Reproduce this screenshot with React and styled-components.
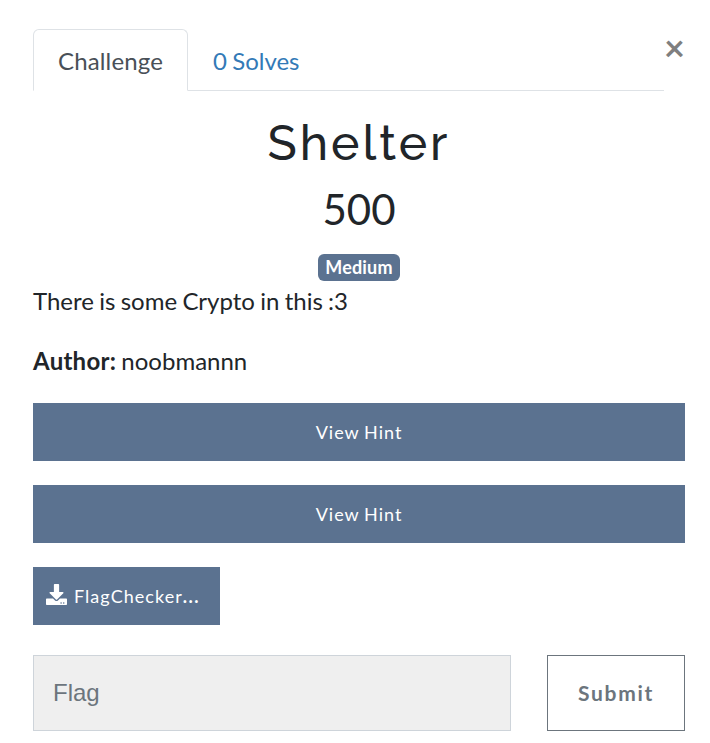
import React from "react";
import styled, { createGlobalStyle } from "styled-components";
import { FaDownload } from "react-icons/fa";

const GlobalStyle = createGlobalStyle`
  *, *::before, *::after { box-sizing: border-box; }
  body {
    margin: 0;
    background: #fff;
    color: #212529;
    font: 400 24px/36px Lato, sans-serif;
    word-spacing: -0.85px;
    overflow: hidden;
  }
`;

const Modal = styled.main`
  width: 710px;
  height: 743px;
  padding: 29px 25px 0 33px;
`;

const Header = styled.header`
  display: flex;
  width: 652px;
`;

const Tabs = styled.nav`
  display: flex;
  width: 631px;
  height: 62px;
  border-bottom: 1px solid #dee2e6;
`;

const Tab = styled.button`
  height: 62px;
  padding: 1px 24px 0;
  border: 1px solid ${(p) => (p.$active ? "#dee2e6" : "transparent")};
  border-bottom-color: ${(p) => (p.$active ? "#fff" : "transparent")};
  border-radius: 6px 6px 0 0;
  background: ${(p) => (p.$active ? "#fff" : "transparent")};
  color: ${(p) => (p.$active ? "#495057" : "#337ab7")};
  font: inherit;
  letter-spacing: ${(p) => (p.$active ? "0.14px" : "0")};
  word-spacing: -0.85px;
`;

const Close = styled.button`
  width: 21px;
  height: 36px;
  padding: 0;
  border: 0;
  background: none;
  color: #7f7f7f;
  font: 700 36px/36px Lato, sans-serif;
`;

const Title = styled.h2`
  margin: 23px 0 0;
  font: 500 48px/58px Raleway, sans-serif;
  letter-spacing: 3px;
  text-align: center;
`;

const Points = styled.h3`
  margin: 8px 0 0;
  font: 400 42px/58px Lato, sans-serif;
  text-align: center;
`;

const BadgeRow = styled.div`
  display: flex;
  justify-content: center;
  margin-top: 16px;
`;

const Badge = styled.span`
  width: 82px;
  height: 27px;
  border-radius: 6px;
  background: #5b7290;
  color: #fff;
  font: 700 18px/26px Lato, sans-serif;
  letter-spacing: 0.15px;
  text-align: center;
`;

const Text = styled.p`
  margin: ${(p) => p.$top || 0}px 0 0;
`;

const Label = styled.strong`
  letter-spacing: 0.25px;
`;

const Hint = styled.button`
  display: block;
  width: 652px;
  height: 58px;
  margin-top: 24px;
  padding: 0;
  border: 0;
  background: #5b7290;
  color: #fff;
  font: 400 18px/27px Lato, sans-serif;
  letter-spacing: 1px;
  word-spacing: -0.9px;
`;

const FileButton = styled(Hint)`
  display: flex;
  align-items: center;
  width: 187px;
  padding: 0 13px;
  gap: 7px;
  letter-spacing: 1.05px;

  svg { margin-top: -3px; }
  b { letter-spacing: 1.4px; }
`;

const Form = styled.form`
  display: flex;
  justify-content: space-between;
  margin-top: 30px;
`;

const FlagInput = styled.input`
  width: 478px;
  height: 76px;
  padding: 0 19px;
  border: 1px solid #ced4da;
  border-radius: 0;
  background: #efefef;
  font: 24px "Liberation Sans", sans-serif;
  &::placeholder { color: #6c757d; opacity: 1; }
`;

const Submit = styled.button`
  width: 138px;
  height: 76px;
  padding: 0 0 2px;
  border: 1px solid #6c757d;
  background: #fff;
  color: #6c757d;
  font: 700 21px Lato, sans-serif;
  letter-spacing: 1.7px;
`;

export default function App() {
  return (
    <Modal>
      <GlobalStyle />
      <Header>
        <Tabs>
          <Tab $active>Challenge</Tab>
          <Tab>0 Solves</Tab>
        </Tabs>
        <Close aria-label="Close">×</Close>
      </Header>
      <Title>Shelter</Title>
      <Points>500</Points>
      <BadgeRow><Badge>Medium</Badge></BadgeRow>
      <Text $top={2}>There is some Crypto in this :3</Text>
      <Text $top={24}><Label>Author:</Label> noobmannn</Text>
      <Hint>View Hint</Hint>
      <Hint>View Hint</Hint>
      <FileButton><FaDownload size={21} /><span>FlagChecker<b>...</b></span></FileButton>
      <Form>
        <FlagInput placeholder="Flag" />
        <Submit type="button">Submit</Submit>
      </Form>
    </Modal>
  );
}
